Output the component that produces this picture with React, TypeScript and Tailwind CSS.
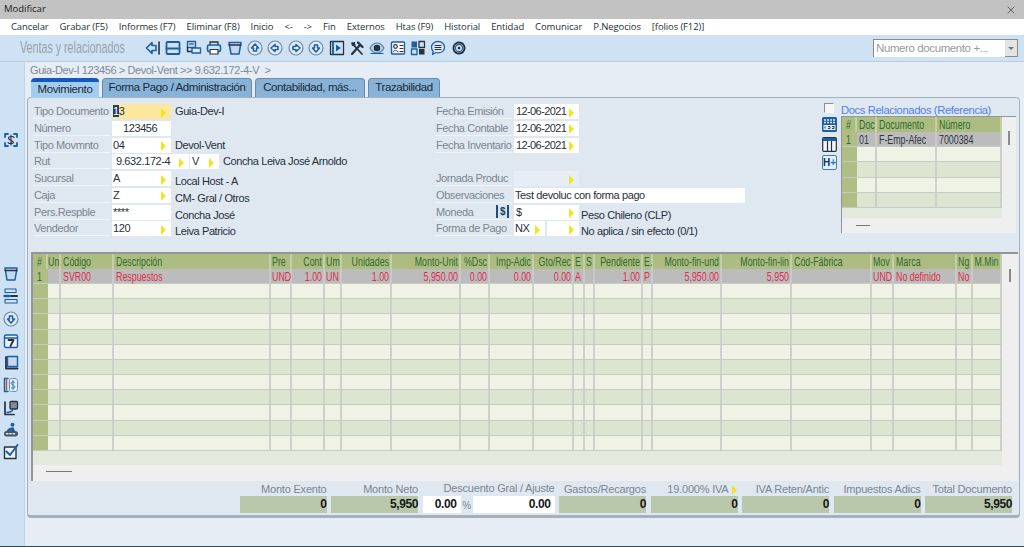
import React from "react"
import { X } from "lucide-react"

const BLUE = "#1c5fa5"
const DARK = "#26323f"

const Ic = ({ children }: { children: React.ReactNode }) => (
    <svg width="16" height="16" viewBox="0 0 16 16" fill="none" strokeLinejoin="round" strokeLinecap="round" className="flex-none">
        {children}
    </svg>
)

const CircleArrow = ({ d }: { d: string }) => (
    <Ic>
        <circle cx="8" cy="8" r="7" fill="#dfe9f3" stroke="#6f8aa6" strokeWidth="1.2" />
        <path d={d} fill="#fff" stroke={BLUE} strokeWidth="1.6" />
    </Ic>
)

const toolbarIcons = [
    <Ic key="back"><path d="M7 2.5 1.5 8 7 13.5V10.5h4v-5H7z" stroke={BLUE} strokeWidth="1.6" /><path d="M14 2v12" stroke={DARK} strokeWidth="1.6" /></Ic>,
    <Ic key="save"><rect x="1.5" y="2" width="13" height="12" rx="1" stroke={BLUE} strokeWidth="1.8" /><path d="M1.5 8.5h13" stroke={BLUE} strokeWidth="1.8" /></Ic>,
    <Ic key="copy"><rect x="1.5" y="1.5" width="8" height="6" stroke={BLUE} strokeWidth="1.4" /><path d="M1.5 7.5v4h6" stroke={DARK} strokeWidth="1.4" /><rect x="6" y="8" width="8.5" height="5" fill="#dfe9f3" stroke={BLUE} strokeWidth="1.4" /><path d="M3.5 4h4" stroke={DARK} /></Ic>,
    <Ic key="print"><path d="M4 5V2h8v3" stroke={DARK} strokeWidth="1.3" /><rect x="1.5" y="5" width="13" height="6.5" rx="1.5" stroke={BLUE} strokeWidth="1.6" /><path d="M4 9.5h8v4.5H4z" fill="#fff" stroke={DARK} strokeWidth="1.2" /></Ic>,
    <Ic key="trash"><path d="M2 2.5h12l-2 11.5H4z" fill="#c5d9ec" stroke={BLUE} strokeWidth="1.5" /><path d="M2 5h12" stroke={DARK} strokeWidth="1.4" /></Ic>,
    <CircleArrow key="u" d="M8 4 4.5 8H6.5v3h3V8h2z" />,
    <CircleArrow key="l" d="M4 8 8 4.5V6.5h3v3H8v2z" />,
    <CircleArrow key="r" d="M12 8 8 4.5V6.5H5v3h3v2z" />,
    <CircleArrow key="d" d="M8 12 4.5 8H6.5V5h3v3h2z" />,
    <Ic key="film"><rect x="1.5" y="1.5" width="13" height="13" stroke={DARK} strokeWidth="1.3" /><path d="M4 2v12" stroke={BLUE} strokeWidth="2" strokeDasharray="1.5 1.2" /><path d="M7 4.5 12 8l-5 3.5z" fill={BLUE} /></Ic>,
    <Ic key="tools"><path d="M3 14 11 5" stroke={DARK} strokeWidth="2.2" /><path d="M9 2.5 13.5 7" stroke={DARK} strokeWidth="2.4" /><path d="M13 14 5.5 6" stroke={DARK} strokeWidth="1.8" /><path d="M2 2.5 6 2 6.5 6 3 6z" fill={DARK} /></Ic>,
    <Ic key="eye"><path d="M1 8c2-3.6 4.5-5 7-5s5 1.4 7 5c-2 3.6-4.5 5-7 5s-5-1.4-7-5z" fill="#bfd4e8" stroke="#4d7fae" strokeWidth="1.2" /><circle cx="8" cy="8" r="3.3" fill={DARK} /><path d="M2 13.5h12" stroke={BLUE} strokeWidth="1.2" /></Ic>,
    <Ic key="card"><rect x="1.5" y="2" width="13" height="12" rx="1" fill="#fff" stroke={BLUE} strokeWidth="1.4" /><circle cx="5.5" cy="6.5" r="1.8" stroke={DARK} strokeWidth="1.2" /><path d="M3 12c0-2 5-2 5 0M10 5.5h3M10 8.5h3M10 11.5h3" stroke={DARK} /></Ic>,
    <Ic key="grid"><rect x="1.5" y="1.5" width="5.5" height="6" fill={BLUE} /><rect x="9" y="1.5" width="5.5" height="6" stroke={DARK} strokeWidth="1.3" /><rect x="1.5" y="9" width="5.5" height="5.5" stroke={BLUE} strokeWidth="1.3" /><rect x="9" y="9" width="5.5" height="5.5" fill={DARK} /></Ic>,
    <Ic key="chat"><path d="M8 1.5c3.8 0 6.5 2.5 6.5 5.7s-2.7 5.6-6.5 5.6c-.8 0-1.5-.1-2.2-.3L2.5 14.5l.7-3.2C2 10.2 1.5 8.8 1.5 7.2 1.5 4 4.2 1.5 8 1.5z" fill="#dfe9f3" stroke={BLUE} strokeWidth="1.3" /><path d="M5 5.5h6M5 7.5h6M5 9.5h6" stroke={DARK} /></Ic>,
    <Ic key="gear"><circle cx="8" cy="8" r="5.5" stroke={DARK} strokeWidth="2" strokeDasharray="2.2 1.3" /><circle cx="8" cy="8" r="3.5" fill="#fff" stroke={BLUE} strokeWidth="1.3" /><circle cx="8" cy="8" r="1.5" fill={DARK} /></Ic>,
]

const sideIcons = [
    <Ic key="trash"><path d="M2 2h12l-2 12H4z" fill="#c5d9ec" stroke={BLUE} strokeWidth="1.5" /><path d="M2 4.5h12" stroke={DARK} strokeWidth="1.4" /></Ic>,
    <Ic key="form"><rect x="2" y="1" width="11" height="3.5" stroke={BLUE} strokeWidth="1.1" /><rect x="2" y="11.5" width="12" height="3.5" stroke={BLUE} strokeWidth="1.1" /><path d="M8 8H14" stroke={DARK} strokeWidth="2" /><path d="M1.5 8H6" stroke={BLUE} strokeWidth="2.4" /></Ic>,
    <CircleArrow key="down" d="M8 12 4.5 8H6.5V5h3v3h2z" />,
    <Ic key="cal"><rect x="1.5" y="2" width="13" height="12.5" rx="1.5" fill="#eef3f8" stroke={BLUE} strokeWidth="1.4" /><path d="M1.5 5h13" stroke={BLUE} strokeWidth="1.4" /><path d="M5.5 7h5L7.5 13" stroke={DARK} strokeWidth="1.8" /></Ic>,
    <Ic key="layer"><path d="M3 2v11.5h11.5" stroke={DARK} strokeWidth="1.8" /><rect x="4.5" y="1.5" width="10" height="10" fill="#c5d9ec" stroke={BLUE} strokeWidth="1.4" /></Ic>,
    <Ic key="money"><path d="M5 1.5H1.5v13H5" stroke={BLUE} strokeWidth="1.5" /><path d="M3.5 3v10" stroke="#b5562a" strokeWidth="1.3" /><path d="M6.5 3c0-1 1-1.5 3-1.5h2.5c1.5 0 2.5 1 2.5 3v7c0 2-1 3-2.5 3H9.5c-2 0-3-.5-3-1.5z" fill="#e8f0f7" stroke="#5f8fc0" strokeWidth="1" /><path d="M12 5.5C11.5 4.5 8 4.5 8 6.2S12 8 12 10c0 1.6-3.5 1.6-4 .5M10 3.5v9" stroke="#3b78b5" strokeWidth="1" /></Ic>,
    <Ic key="chart"><path d="M2 2v12.5h9" stroke={DARK} strokeWidth="1.7" /><rect x="7" y="1.5" width="7.5" height="7.5" rx="1" fill="#7f8b98" stroke={DARK} strokeWidth="1.3" /><path d="M4 12.5c2 0 4-.6 5.5-2" stroke={BLUE} strokeWidth="1.4" /></Ic>,
    <Ic key="tank"><circle cx="9.5" cy="2.8" r="2" fill={BLUE} /><path d="M3.5 9c1.5-3 4-3.8 7-3.8L12 9z" fill={BLUE} /><rect x="1" y="9" width="14" height="5.5" rx="2.7" fill="#4a5663" /><path d="M3.5 11.8h9" stroke="#dfe9f3" strokeWidth="1.4" strokeDasharray="1.5 1.8" /></Ic>,
    <Ic key="check"><rect x="1.5" y="3" width="11.5" height="11.5" fill="#eef3f8" stroke={DARK} strokeWidth="1.4" /><path d="M3.5 7.5 7 11l7.5-10" stroke={BLUE} strokeWidth="2" /></Ic>,
]

const Arrow = ({ className = "" }: { className?: string }) => (
    <span className={"block w-0 h-0 flex-none border-y-[5px] border-y-transparent border-l-[5px] border-l-[#efe61e] mt-[2px] " + className} />
)

const Label = ({ text, children }: { text?: string; children?: React.ReactNode }) => (
    <div className="flex-none w-[77px] h-[15px] border-b border-[#eef3f8] text-[#7b858f] leading-[14px] pl-px flex justify-between whitespace-nowrap">
        <span>{text}</span>
        {children}
    </div>
)

const Input = ({ value, w, arrow = true, bg = "bg-white", pl = "pl-px" }: { value?: React.ReactNode; w: string; arrow?: boolean; bg?: string; pl?: string }) => (
    <div className={"flex-none h-[15px] flex items-center justify-between pr-[5px] text-[#27303a] whitespace-nowrap " + w + " " + bg + " " + pl}>
        <span className="leading-[13px]">{value}</span>
        {arrow && <Arrow />}
    </div>
)

const Desc = ({ text, drop, ml = "ml-[4px]" }: { text: string; drop?: boolean; ml?: string }) => (
    <span className={"text-[#27303a] whitespace-nowrap leading-[14px] " + ml + " " + (drop ? "mt-[3px]" : "")}>{text}</span>
)

const Row = ({ children }: { children: React.ReactNode }) => (
    <div className="flex items-start h-[16.75px]">{children}</div>
)

type Col = { h: string; w: string; v: string; a: string }

const columns: Col[] = [
    { h: "#", w: "w-[15px]", v: "1", a: "text-center" },
    { h: "Un", w: "w-[13px]", v: "", a: "text-center" },
    { h: "Código", w: "w-[53px]", v: "SVR00", a: "text-left pl-[2px]" },
    { h: "Descripción", w: "w-[157px]", v: "Respuestos", a: "text-left pl-[2px]" },
    { h: "Pre", w: "w-[21px]", v: "UND", a: "text-left pl-px" },
    { h: "Cont", w: "w-[33px]", v: "1.00", a: "text-right pr-px" },
    { h: "Um", w: "w-[17px]", v: "UN", a: "text-left pl-px" },
    { h: "Unidades", w: "w-[50px]", v: "1.00", a: "text-right pr-px" },
    { h: "Monto-Unit", w: "w-[69px]", v: "5,950.00", a: "text-right pr-px" },
    { h: "%Dsc", w: "w-[29px]", v: "0.00", a: "text-right pr-px" },
    { h: "Imp-Adic", w: "w-[44px]", v: "0.00", a: "text-right pr-px" },
    { h: "Gto/Rec", w: "w-[40px]", v: "0.00", a: "text-right pr-px" },
    { h: "E", w: "w-[11px]", v: "A", a: "text-left pl-px" },
    { h: "S", w: "w-[10px]", v: "", a: "text-center" },
    { h: "Pendiente", w: "w-[48px]", v: "1.00", a: "text-right pr-px" },
    { h: "E.", w: "w-[10px]", v: "P", a: "text-left pl-px" },
    { h: "Monto-fin-und", w: "w-[69px]", v: "5,950.00", a: "text-right pr-px" },
    { h: "Monto-fin-lin", w: "w-[70px]", v: "5,950", a: "text-right pr-px" },
    { h: "Cód-Fábrica", w: "w-[80px]", v: "", a: "text-left pl-[2px]" },
    { h: "Mov", w: "w-[22px]", v: "UND", a: "text-left pl-px" },
    { h: "Marca", w: "w-[63px]", v: "No definido", a: "text-left pl-[2px]" },
    { h: "Ng", w: "w-[16px]", v: "No", a: "text-left pl-px" },
    { h: "M.Min", w: "w-[29px]", v: "", a: "text-center" },
]

const docColumns: Col[] = [
    { h: "#", w: "w-[15px]", v: "1", a: "text-center" },
    { h: "Doc", w: "w-[20px]", v: "01", a: "text-left pl-[2px]" },
    { h: "Documento", w: "w-[60px]", v: "F-Emp-Afec", a: "text-left pl-[2px]" },
    { h: "Número", w: "w-[65px]", v: "7000384", a: "text-left pl-[2px]" },
]

// grid text is a condensed face in the picture, there is none installed so it is squeezed
const Squeezed = ({ children }: { children: React.ReactNode }) => (
    <div className="w-[147%] origin-left scale-x-[0.68]">{children}</div>
)

const GridTable = ({ cols, rows, color, rowH }: { cols: Col[]; rows: number; color: string; rowH: string }) => (
    <div className="flex flex-col">
        <div className="flex h-[15px] bg-[#adbd82] text-[#2e6b2c] leading-[15px]">
            {cols.map((c, i) => (
                <div key={i} className={"flex-none h-full whitespace-nowrap border-r-2 border-[#c3cfa6] " + c.w + " " + c.a}>
                    <Squeezed>{c.h}</Squeezed>
                </div>
            ))}
        </div>
        {Array.from({ length: rows }).map((_, r) => (
            <div key={r} className={"flex border-b border-[#c6cbc3] " + rowH + " " + (r === 0 ? "bg-[#bcbcbc] " + color : r % 2 === 1 ? "bg-[#eff3e6]" : "bg-[#dce5d1]")}>
                {cols.map((c, i) => (
                    <div key={i} className={"flex-none h-full whitespace-nowrap leading-[15px] border-r-2 " + c.w + " " + c.a + " " + (i === 0 ? "bg-[#b0bd85] border-[#b0bd85] text-[#2e6b2c]" : r === 0 ? "border-[#c9c9c9]" : "border-[#cdd1ca]")}>
                        {r === 0 && c.v ? <Squeezed>{c.v}</Squeezed> : null}
                    </div>
                ))}
            </div>
        ))}
    </div>
)

const Total = ({ label, value, arrow }: { label: string; value: string; arrow?: boolean }) => (
    <div className="flex-none flex flex-col w-[87px]">
        <div className="h-[14px] flex justify-end items-center gap-[3px] text-[#7b858f] tracking-[-0.2px] whitespace-nowrap leading-[13px]">
            <span>{label}</span>
            {arrow && <Arrow className="mt-0 mr-px" />}
        </div>
        <div className="h-[17px] bg-[#b9c8ab] text-right font-bold text-[12px] leading-[17px] text-[#15191c]">{value}</div>
    </div>
)

const menu = ["Cancelar", "Grabar (F5)", "Informes (F7)", "Eliminar (F8)", "Inicio", "<-", "->", "Fin", "Externos", "Htas (F9)", "Historial", "Entidad", "Comunicar", "P.Negocios", "[folios (F12)]"]

export default function App() {
    return (
        <div className="w-[1024px] h-[547px] overflow-hidden flex flex-col bg-[#e6edf5] font-['Liberation_Sans',Arial,sans-serif] text-[11px] tracking-[-0.4px]">
            {/* Title bar */}
            <div className="h-[19px] flex-none bg-[#c2c2c2] flex items-center justify-between pl-[4px] pr-[7px] text-[#1c1c1c] font-['Open_Sans',sans-serif] text-[9.5px] tracking-normal">
                <span>Modificar</span>
                <X size={12} strokeWidth={1.4} color="#333" />
            </div>

            {/* Menu */}
            <div className="h-[16px] flex-none bg-white flex items-center pl-[11px] gap-[11px] font-['Open_Sans',sans-serif] text-[9.5px] tracking-[-0.12px] text-[#26303a] whitespace-nowrap">
                {menu.map((m) => <span key={m}>{m}</span>)}
            </div>

            {/* Toolbar */}
            <div className="h-[27px] flex-none bg-[#cfe2f4] border-b border-[#b4cde4] flex items-center">
                <div className="w-[145px] flex-none pl-[20px]">
                    <div className="w-[159%] origin-left scale-x-[0.63] text-[17px] tracking-normal text-[#98a2ac] whitespace-nowrap">Ventas y relacionados</div>
                </div>
                <div className="flex items-center gap-[4.4px] -mt-px">{toolbarIcons}</div>
                <div className="ml-auto mr-[6px] w-[145px] h-[18px] bg-white border-t border-l border-[#8a8a8a] flex items-center justify-between pl-[2px] text-[11.5px] text-[#9a9a9a]">
                    <span>Numero documento +...</span>
                    <div className="w-[13px] h-full bg-[#e4e4e4] border-r border-b border-[#8a8a8a] flex items-center justify-center">
                        <span className="w-0 h-0 border-x-[3px] border-x-transparent border-t-[3px] border-t-[#777]" />
                    </div>
                </div>
            </div>

            <div className="flex-1 flex min-h-0">
                {/* Left strip */}
                <div className="w-[25px] flex-none bg-[#cfe2f4] border-r border-[#bcd5ec] flex flex-col items-center pr-[3px] pt-[70px]">
                    <Ic>
                        <path d="M5 2H2v3M11 2h3v3M5 14H2v-3M11 14h3v-3" stroke={BLUE} strokeWidth="1.8" />
                        <path d="M11 5.5C10.5 4 5.5 4 5.5 6.2S10.5 8.5 10.5 10.300c0 1.7-5 1.7-5.5.2M8 3v10" stroke={DARK} strokeWidth="1.1" />
                    </Ic>
                    <div className="mt-[118px] flex flex-col gap-[6.3px]">{sideIcons}</div>
                </div>

                <div className="flex-1 flex flex-col pl-[2px] pr-[4px] min-w-0">
                    <div className="h-[16px] flex-none pl-[3px] leading-[16px] text-[#7f8a95] whitespace-pre">{"Guia-Dev-I 123456 > Devol-Vent >> 9.632.172-4-V  >"}</div>

                    {/* Tabs */}
                    <div className="h-[19px] flex-none flex pl-[4px] gap-[3px] text-[11.5px] text-[#1d2a35] relative z-10">
                        <div className="w-[68px] h-[20px] bg-[#a3cdee] border-t-[4px] border-[#1558c0] text-center leading-[15px] rounded-t-sm">Movimiento</div>
                        <div className="w-[150px] h-[19px] bg-[#87b3d8] border border-b-0 border-[#6a8ba8] text-center leading-[17px] rounded-t-sm">Forma Pago / Administración</div>
                        <div className="w-[110px] h-[19px] bg-[#87b3d8] border border-b-0 border-[#6a8ba8] text-center leading-[17px] rounded-t-sm">Contabilidad, más...</div>
                        <div className="w-[72px] h-[19px] bg-[#87b3d8] border border-b-0 border-[#6a8ba8] text-center leading-[17px] rounded-t-sm">Trazabilidad</div>
                    </div>

                    {/* Panel */}
                    <div className="w-[993px] h-[421px] flex-none bg-[#dfe8f1] border border-b-[3px] border-[#a3b1be] rounded-sm flex flex-col">
                        <div className="h-[154px] flex-none flex pl-[5px] pt-[6px]">
                            <div className="w-[402px] flex-none">
                                <Row><Label text="Tipo Documento" /><span className="w-[2px]" /><Input w="w-[59px]" bg="bg-[#fde79c]" value={<><span className="bg-[#1c3f7a] text-white">1</span>3</>} /><Desc text="Guia-Dev-I" /></Row>
                                <Row><Label text="Número" /><span className="w-[2px]" /><Input w="w-[59px]" arrow={false} value="123456" pl="pl-[11px]" /></Row>
                                <Row><Label text="Tipo Movmnto" /><span className="w-[2px]" /><Input w="w-[59px]" value="04" /><Desc text="Devol-Vent" /></Row>
                                <Row><Label text="Rut" /><span className="w-[2px]" /><Input w="w-[77px]" value="9.632.172-4" pl="pl-[4px]" /><span className="w-px" /><Input w="w-[29px]" value="V" pl="pl-[2px]" /><Desc text="Concha Leiva José Arnoldo" /></Row>
                                <Row><Label text="Sucursal" /><span className="w-[2px]" /><Input w="w-[59px]" value="A" /><Desc text="Local Host - A" drop /></Row>
                                <Row><Label text="Caja" /><span className="w-[2px]" /><Input w="w-[59px]" value="Z" /><Desc text="CM- Gral / Otros" drop /></Row>
                                <Row><Label text="Pers.Respble" /><span className="w-[2px]" /><Input w="w-[59px]" arrow={false} value="****" /><Desc text="Concha José" drop /></Row>
                                <Row><Label text="Vendedor" /><span className="w-[2px]" /><Input w="w-[59px]" value="120" /><Desc text="Leiva Patricio" drop /></Row>
                            </div>

                            <div className="w-[310px] flex-none">
                                <Row><Label text="Fecha Emisión" /><span className="w-[2px]" /><Input w="w-[65px]" value="12-06-2021" pl="pl-[2px] tracking-[-0.6px]" /></Row>
                                <Row><Label text="Fecha Contable" /><span className="w-[2px]" /><Input w="w-[65px]" value="12-06-2021" pl="pl-[2px] tracking-[-0.6px]" /></Row>
                                <Row><Label text="Fecha Inventario" /><span className="w-[2px]" /><Input w="w-[65px]" value="12-06-2021" pl="pl-[2px] tracking-[-0.6px]" /></Row>
                                <Row><span /></Row>
                                <Row><Label text="Jornada Produc" /><span className="w-[2px]" /><Input w="w-[65px]" bg="bg-[#e6edf4]" /></Row>
                                <Row><Label text="Observaciones" /><span className="w-[2px]" /><Input w="w-[231px]" arrow={false} value="Test devoluc con forma pago" pl="pl-px" /></Row>
                                <Row>
                                    <Label text="Moneda">
                                        <span className="w-[13px] h-[13px] mr-[3px] bg-[#d8e6f3] border-x-2 border-[#1c4d86] text-[10px] leading-[13px] text-center text-[#1c3d60] font-bold">$</span>
                                    </Label>
                                    <span className="w-[2px]" /><Input w="w-[65px]" value="$" pl="pl-[2px]" /><Desc text="Peso Chileno (CLP)" drop ml="ml-[2px]" />
                                </Row>
                                <Row>
                                    <Label text="Forma de Pago" /><span className="w-[2px]" />
                                    <Input w="w-[31px]" value="NX" /><span className="w-[2px]" /><Input w="w-[32px]" />
                                    <Desc text="No aplica / sin efecto (0/1)" drop ml="ml-[2px]" />
                                </Row>
                            </div>

                            {/* Docs relacionados */}
                            <div className="flex-1 min-w-0 pr-[3px] pl-[77px] -mt-[1px]">
                                <div className="h-[12px] flex">
                                    <span className="w-[10px] h-[10px] ml-[2px] flex-none bg-[#f5f5f5] border border-[#8d8d8d] border-r-white border-b-white mr-[7px]" />
                                    <span className="text-[11.25px] text-[#4d7ff0] whitespace-nowrap leading-[12px] mt-px">Docs Relacionados (Referencia)</span>
                                </div>
                                <div className="flex mt-[1px]">
                                    <div className="w-[19px] flex-none flex flex-col gap-[4px] pt-[1px]">
                                        <svg width="15" height="15" viewBox="0 0 15 15"><rect width="15" height="15" rx="1.5" fill={BLUE} /><path d="M2 3h11M2 5.5h11" stroke="#dfe9f3" strokeWidth="1.3" strokeDasharray="2 1" /><rect x="1.5" y="8" width="12" height="5" fill="#dfe9f3" /><path d="M3 9.5v2M6 9.5h2v2H6M10 9.5h2v2h-2" stroke={DARK} strokeWidth=".9" fill="none" /></svg>
                                        <svg width="15" height="15" viewBox="0 0 15 15" className="mt-px"><rect x=".7" y=".7" width="13.6" height="13.6" rx="1" fill="#f3f6f9" stroke={DARK} strokeWidth="1.2" /><rect x="1" y="1" width="13" height="3" fill={BLUE} /><path d="M5.5 4v10M9.5 4v10" stroke={DARK} strokeWidth="1.2" /></svg>
                                        <span className="w-[15px] h-[15px] bg-[#e5eff8] border border-[#3e7dbd] rounded-[2px] text-[10px] tracking-normal leading-[13px] font-bold text-center text-[#12335c] -mt-[1px]">H<span className="text-[#2a74c4]">+</span></span>
                                    </div>
                                    <div className="w-[175px] h-[117px] flex-none border-t border-l border-[#8f979c] flex bg-[#efefef] text-[13px] tracking-normal text-[#33393f]">
                                        <div className="w-[160px] flex-none flex flex-col">
                                            <GridTable cols={docColumns} rows={5} color="" rowH="h-[15.2px]" />
                                            <div className="h-[10px] bg-[#e3e9dc]" />
                                            <div className="flex-1 pl-[14px] pt-[7px]"><div className="w-[14px] h-px bg-[#777]" /></div>
                                        </div>
                                        <div className="flex-1 flex justify-center pt-[14px]"><div className="w-[2px] h-[14px] bg-[#8a8a8a]" /></div>
                                    </div>
                                </div>
                            </div>
                        </div>

                        {/* Lines grid */}
                        <div className="ml-[3px] w-[987px] h-[229px] flex-none border-t-2 border-l-2 border-[#8f979c] flex bg-[#efefef] text-[13px] tracking-normal">
                            <div className="w-[969px] flex-none flex flex-col">
                                <GridTable cols={columns} rows={12} color="text-[#dd2f4a]" rowH="h-[15.17px]" />
                                <div className="h-[14px] bg-[#e3e9dc]" />
                                <div className="flex-1 pl-[13px] pt-[6px]"><div className="w-[26px] h-px bg-[#777]" /></div>
                            </div>
                            <div className="flex-1 flex justify-center pt-[15px]"><div className="w-[2px] h-[13px] bg-[#8a8a8a]" /></div>
                        </div>

                        {/* Totals */}
                        <div className="flex pl-[211.5px] pt-[1px] gap-[4.5px]">
                            <Total label="Monto Exento" value="0" />
                            <Total label="Monto Neto" value="5,950" />
                            <div className="w-[132px] flex-none flex flex-col">
                                <div className="h-[14px] text-right text-[#7b858f] tracking-[-0.2px] whitespace-nowrap leading-[13px]">Descuento Gral / Ajuste</div>
                                <div className="h-[17px] flex font-bold text-[12px] leading-[17px] text-[#15191c]">
                                    <div className="w-[38px] bg-white text-right pr-[4px]">0.00</div>
                                    <div className="w-[12px] text-center font-normal text-[10px] text-[#7b858f] leading-[20px]">%</div>
                                    <div className="flex-1 bg-white text-right pr-[4px]">0.00</div>
                                </div>
                            </div>
                            <Total label="Gastos/Recargos" value="0" />
                            <Total label="19.000% IVA" value="0" arrow />
                            <Total label="IVA Reten/Antic" value="0" />
                            <Total label="Impuestos Adics" value="0" />
                            <Total label="Total Documento" value="5,950" />
                        </div>
                    </div>
                </div>
            </div>
            <div className="h-px flex-none bg-[#2f4a55]" />
        </div>
    )
}
